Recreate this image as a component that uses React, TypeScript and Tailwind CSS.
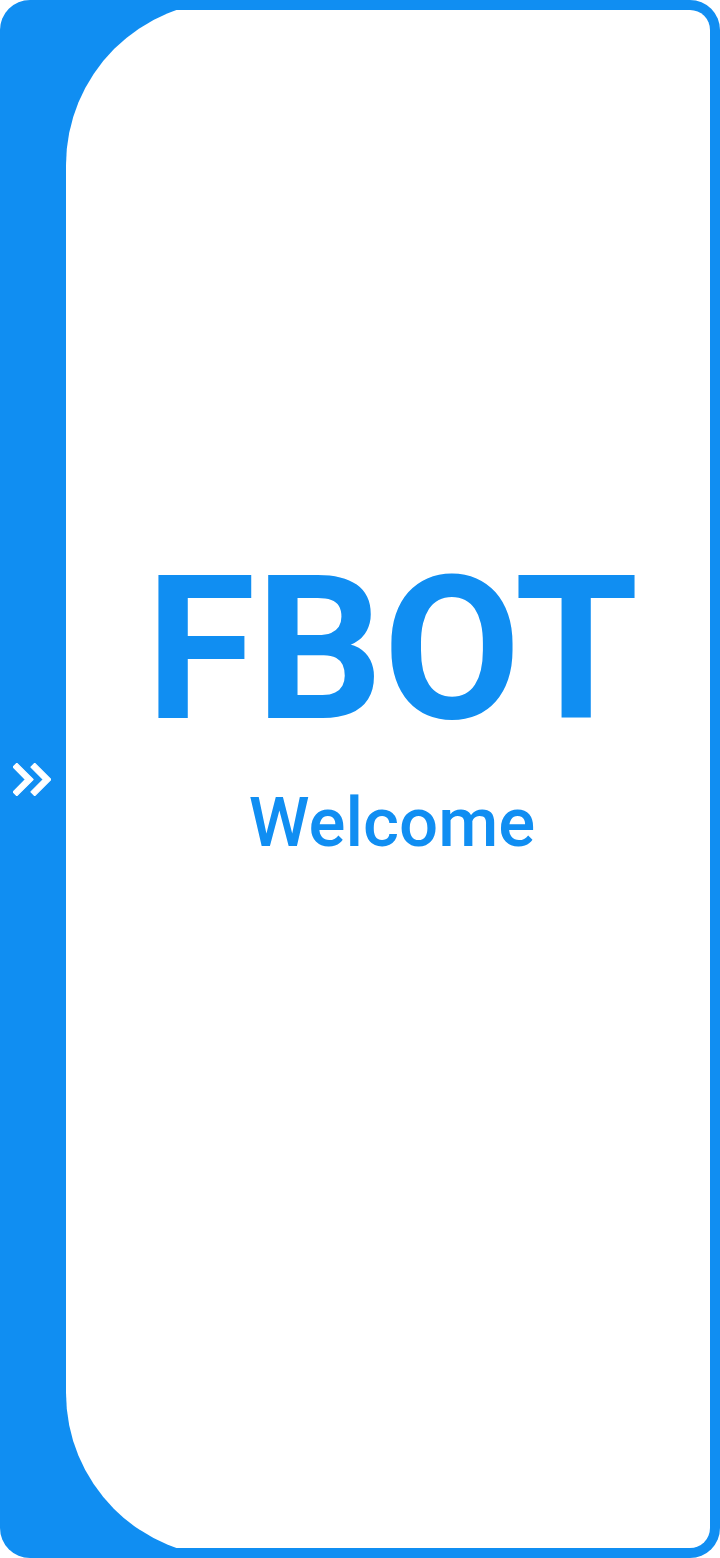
export default function App() {
  return (
    <div
      className="w-[720px] h-[1558px] bg-[#108ef2] rounded-[30px] flex pt-[10px] pr-[10px] pb-[10px]"
      style={{ fontFamily: 'Roboto, "Liberation Sans", sans-serif' }}
    >
      <div className="w-[66px] flex items-center justify-center shrink-0">
        <svg width="38" height="33" viewBox="5 6 14 12" className="mr-[2px]">
          <path
            d="M6.41 6L5 7.41 9.58 12 5 16.59 6.41 18l6-6zM13 6l-1.41 1.41L16.17 12l-4.58 4.59L13 18l6-6z"
            fill="white"
            stroke="white"
            strokeWidth="0.4"
            strokeLinejoin="round"
          />
        </svg>
      </div>
      <div className="flex-1 flex flex-col overflow-hidden rounded-r-[20px]">
        <div className="flex-1 -my-[9px] bg-white rounded-l-[164px] flex flex-col items-center pt-[549px] pl-[8px]">
          <h1 className="text-[200px] leading-none font-bold text-[#108ef2]">FBOT</h1>
          <p className="mt-[38px] text-[69px] leading-none font-medium text-[#108ef2]">Welcome</p>
        </div>
      </div>
    </div>
  )
}
